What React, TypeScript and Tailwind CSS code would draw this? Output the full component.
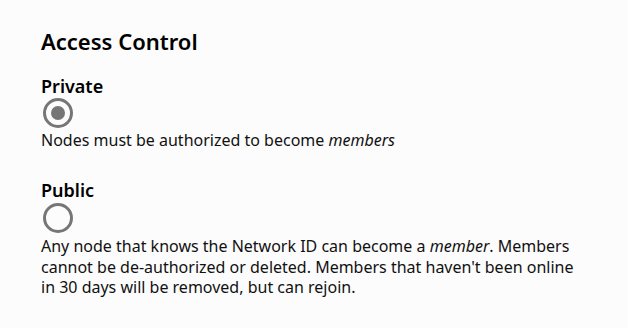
import React from "react";

function Radio({ checked }: { checked?: boolean }) {
  return (
    <div className="flex h-[30px] w-[30px] items-center justify-center rounded-full border-[3px] border-[#767676]">
      {checked && <div className="h-[14px] w-[14px] rounded-full bg-[#767676]" />}
    </div>
  );
}

export default function App() {
  return (
    <div className="min-h-[328px] w-full bg-[#fcfcfc] pl-[41px] pt-[27px] text-[#111] [font-family:'Noto_Sans',sans-serif]">
      <h2 className="text-[22px] font-semibold leading-[28px] text-black">Access Control</h2>
      <div className="mt-[19px] flex w-[542px] flex-col">
        <div className="text-[18px] font-semibold leading-[24px] text-black">Private</div>
        <div className="ml-[2px]">
          <Radio checked />
        </div>
        <p className="mt-[2px] text-[16px] leading-[21px]">
          Nodes must be authorized to become <em>members</em>
        </p>
        <div className="mt-[27px] text-[18px] font-semibold leading-[24px] text-black">Public</div>
        <div className="ml-[2px] mt-[1px]">
          <Radio />
        </div>
        <p className="mt-[3px] text-[16px] leading-[20.5px]">
          Any node that knows the Network ID can become a <em>member</em>. Members cannot be de-authorized or deleted. Members that haven't been online in 30 days will be removed, but can rejoin.
        </p>
      </div>
    </div>
  );
}
